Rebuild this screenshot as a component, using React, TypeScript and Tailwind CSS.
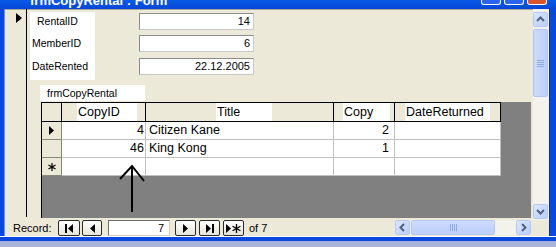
import React from 'react';

const blue = 'bg-[#0a47de]';

function Tri({ dir = 'right' }: { dir?: 'left' | 'right' }) {
  return (
    <svg width="5" height="9" viewBox="0 0 5 9">
      <path d={dir === 'right' ? 'M0 0L5 4.5L0 9Z' : 'M5 0L0 4.5L5 9Z'} fill="#000" />
    </svg>
  );
}

function Bar() {
  return <div className="h-[9px] w-[2px] bg-black" />;
}

function Star({ size = 8 }: { size?: number }) {
  return (
    <svg width={size} height={size} viewBox="0 0 8 8">
      <path d="M4 0V8M0.5 2L7.5 6M0.5 6L7.5 2" stroke="#000" strokeWidth="1.2" fill="none" />
    </svg>
  );
}

function Chevron({ dir }: { dir: 'up' | 'down' | 'left' | 'right' }) {
  const d = {
    up: 'M3 8L6.5 4.5L10 8',
    down: 'M3 5L6.5 8.5L10 5',
    left: 'M8 3L4.5 6.5L8 10',
    right: 'M5 3L8.5 6.5L5 10',
  }[dir];
  return (
    <svg width="13" height="13" viewBox="0 0 13 13">
      <path d={d} stroke="#4d6185" strokeWidth="2" fill="none" />
    </svg>
  );
}

function ScrollBtn({ dir }: { dir: 'up' | 'down' | 'left' | 'right' }) {
  return (
    <div className="flex h-[15px] w-[15px] shrink-0 items-center justify-center rounded-[2px] border border-[#b7c9f3] bg-gradient-to-br from-[#dce7fe] to-[#b9cdf8]">
      <Chevron dir={dir} />
    </div>
  );
}

function NavBtn({ w, children }: { w: string; children: React.ReactNode }) {
  return (
    <div className={`flex h-[16px] items-center justify-center gap-[1px] rounded-[2px] border border-[#2a2a2a] bg-gradient-to-b from-white to-[#e6e4da] ${w}`}>
      {children}
    </div>
  );
}

function Field({ label, value, pad, h }: { label: string; value: string; pad: string; h: string }) {
  return (
    <div className={`flex items-start ${h}`}>
      <div className={`ml-[3px] h-full w-[65px] bg-white pt-[1px] text-[10.5px] leading-[17px] text-black ${pad}`}>{label}</div>
      <div className="ml-[44px] mt-[1px] flex h-[17px] w-[115px] items-center justify-end border border-[#8c8c8c] border-b-[#c8c8c8] border-r-[#c8c8c8] bg-white pr-[3px] text-[11px]">
        {value}
      </div>
    </div>
  );
}

const cols = [
  { w: 'w-[84px]', head: 'CopyID', hp: 'ml-[15px] w-[60px]' },
  { w: 'w-[188px]', head: 'Title', hp: 'ml-[70px] w-[56px]' },
  { w: 'w-[61px]', head: 'Copy', hp: 'ml-[9px] w-[47px]' },
  { w: 'w-[106px]', head: 'DateReturned', hp: 'ml-[10px] w-[85px]' },
];

const rows = [
  { sel: 'cur', id: '4', title: 'Citizen Kane', copy: '2' },
  { sel: '', id: '46', title: 'King Kong', copy: '1' },
  { sel: 'new', id: '', title: '', copy: '' },
];

export default function App() {
  return (
    <div className="flex h-[247px] w-[556px] flex-col overflow-hidden bg-[#a9b2da] font-['Liberation_Sans',Arial,sans-serif] text-black">
      {/* title bar, cut off at the top of the shot */}
      <div className="flex h-[9px] items-end overflow-hidden bg-gradient-to-b from-[#0a5ae8] to-[#0646d6]">
        <div className="pb-[1px] pl-[30px] text-[13px] font-bold leading-[14px] text-white">frmCopyRental : Form</div>
        <div className="ml-auto mr-[9px] flex gap-[3px] self-start">
          <div className="h-[5px] w-[20px] rounded-b-[3px] border border-t-0 border-white bg-[#2a64f0]" />
          <div className="h-[5px] w-[20px] rounded-b-[3px] border border-t-0 border-white bg-[#2a64f0]" />
          <div className="h-[5px] w-[20px] rounded-b-[3px] border border-t-0 border-white bg-[#d9532c]" />
        </div>
      </div>

      <div className="flex h-[227px]">
        <div className={`w-[5px] ${blue} border-r border-[#6f8ee8]`} />
        <div className="flex w-[544px] flex-col bg-[#ece9d8] shadow-[inset_0_1px_0_#a9a799]">
          <div className="flex h-[211px]">
            {/* record selector */}
            <div className="mb-[3px] w-[22px] border-r border-black pl-[11px] pt-[4px]">
              <svg width="6" height="10" viewBox="0 0 6 10">
                <path d="M0 0L6 5L0 10Z" fill="#000" />
              </svg>
            </div>

            {/* form body */}
            <div className="flex w-[506px] flex-col pt-[3px]">
              <Field label="RentalID" value="14" pad="pl-[7px]" h="h-[22px]" />
              <Field label="MemberID" value="6" pad="pl-[2px]" h="h-[23px]" />
              <Field label="DateRented" value="22.12.2005" pad="pl-[2px]" h="h-[23px]" />

              <div className="ml-[13px] mt-[5px] h-[16px] w-[105px] bg-white pl-[7px] text-[10.5px] leading-[16px]">frmCopyRental</div>

              <div className="relative ml-[14px] mt-[1px] h-[116px] w-[490px] border-l border-black bg-[#808080]">
                <div className="flex h-[20px] w-[459px] border-y border-black bg-[#ece9d8] text-[12.5px]">
                  <div className="h-full w-[20px] border-r border-black" />
                  {cols.map((c) => (
                    <div key={c.head} className={`flex h-full border-r border-black ${c.w}`}>
                      <div className={`flex h-full items-center bg-white pl-[1px] ${c.hp}`}>{c.head}</div>
                    </div>
                  ))}
                </div>
                {rows.map((r, i) => (
                  <div key={i} className="flex h-[18px] w-[459px] text-[12.5px]">
                    <div className="flex h-full w-[20px] items-center justify-center border-b border-r border-[#8a887c] bg-[#ece9d8]">
                      {r.sel === 'cur' && <Tri />}
                      {r.sel === 'new' && <Star />}
                    </div>
                    <div className="flex h-full w-[84px] items-center justify-end border-b border-r border-[#c0c0c0] bg-white pr-[1px]">{r.id}</div>
                    <div className="flex h-full w-[188px] items-center border-b border-r border-[#c0c0c0] bg-white pl-[3px]">{r.title}</div>
                    <div className="flex h-full w-[61px] items-center justify-end border-b border-r border-[#c0c0c0] bg-white pr-[5px]">{r.copy}</div>
                    <div className="h-full w-[106px] border-b border-r border-[#c0c0c0] bg-white" />
                  </div>
                ))}

                {/* hand-drawn annotation arrow */}
                <svg className="absolute left-0 top-0" width="490" height="116" viewBox="0 0 490 116">
                  <path d="M90 64L90 110M78 77L90 64L102 79" stroke="#000" strokeWidth="2" fill="none" />
                </svg>
              </div>
            </div>

            {/* vertical scrollbar */}
            <div className="flex w-[16px] flex-col bg-[#f4f2ec] pt-[3px] pb-[1px]">
              <ScrollBtn dir="up" />
              <div className="mt-[2px] flex h-[68px] w-[15px] items-center justify-center rounded-[2px] border border-[#b3c6f4] bg-gradient-to-r from-[#cddbfd] to-[#bccff9]">
                <div className="flex flex-col gap-[1px]">
                  <div className="h-px w-[7px] bg-[#8fa9e6]" />
                  <div className="h-px w-[7px] bg-[#8fa9e6]" />
                  <div className="h-px w-[7px] bg-[#8fa9e6]" />
                  <div className="h-px w-[7px] bg-[#8fa9e6]" />
                </div>
              </div>
              <div className="flex-1" />
              <ScrollBtn dir="down" />
            </div>
          </div>

          {/* navigation bar */}
          <div className="flex h-[16px] items-center text-[11px]">
            <div className="w-[53px] pl-[8px]">Record:</div>
            <NavBtn w="w-[22px]">
              <Bar />
              <Tri dir="left" />
            </NavBtn>
            <div className="ml-[2px]">
              <NavBtn w="w-[20px]">
                <Tri dir="left" />
              </NavBtn>
            </div>
            <div className="ml-[6px] flex h-[16px] w-[62px] items-center justify-end border border-[#6e6e6e] border-b-[#d0cec4] border-r-[#d0cec4] bg-white pr-[5px]">7</div>
            <div className="ml-[5px]">
              <NavBtn w="w-[21px]">
                <Tri />
              </NavBtn>
            </div>
            <div className="ml-[3px]">
              <NavBtn w="w-[21px]">
                <Tri />
                <Bar />
              </NavBtn>
            </div>
            <div className="ml-[3px]">
              <NavBtn w="w-[21px]">
                <Tri />
                <Star size={9} />
              </NavBtn>
            </div>
            <div className="ml-[5px]">of 7</div>

            <div className="ml-auto mr-[18px] flex h-[15px] w-[136px] self-start bg-[#f4f2ec]">
              <ScrollBtn dir="left" />
              <div className="ml-[1px] flex h-[15px] w-[84px] items-center justify-center gap-[1px] rounded-[2px] border border-[#b3c6f4] bg-gradient-to-b from-[#cddbfd] to-[#bccff9]">
                <div className="h-[7px] w-px bg-[#8fa9e6]" />
                <div className="h-[7px] w-px bg-[#8fa9e6]" />
                <div className="h-[7px] w-px bg-[#8fa9e6]" />
                <div className="h-[7px] w-px bg-[#8fa9e6]" />
              </div>
              <div className="flex-1" />
              <ScrollBtn dir="right" />
            </div>
          </div>
        </div>
        <div className={`w-[7px] ${blue} border-l border-[#0a2fa0]`} />
      </div>
      <div className={`h-[5px] ${blue} border-t border-white`} />
      <div className="h-[6px]" />
    </div>
  );
}
